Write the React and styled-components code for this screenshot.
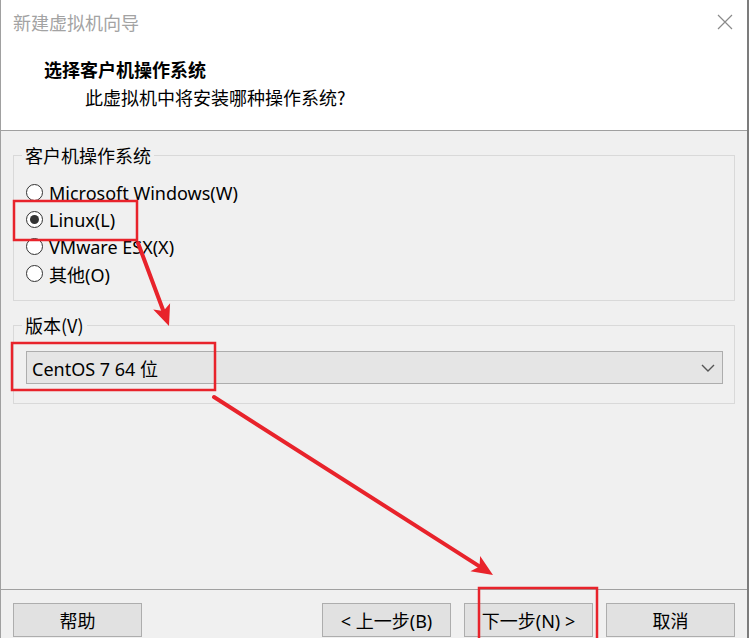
import React from 'react';
import styled, { createGlobalStyle } from 'styled-components';

const GlobalStyle = createGlobalStyle`
  html, body {
    margin: 0;
    padding: 0;
    background: #f0f0f0;
    overflow: hidden;
  }
  body {
    font-family: "Noto Sans", "Noto Sans CJK SC", sans-serif;
    color: #000;
  }
`;

const Window = styled.div`
  position: relative;
  width: 749px;
  height: 638px;
  box-sizing: border-box;
  border-left: 1px solid #a0a0a0;
  border-right: 2px solid #7c7c7c;
  background: #f0f0f0;
  display: flex;
  flex-direction: column;
  overflow: hidden;
`;

const TitleBar = styled.div`
  height: 44px;
  flex: none;
  background: #fff;
  display: flex;
  align-items: center;
  justify-content: space-between;
  padding: 0 14px 0 12px;
`;

const TitleText = styled.span`
  font-size: 18px;
  color: #a3a3a3;
  font-family: "Noto Sans CJK SC", sans-serif;
`;

const Header = styled.div`
  flex: none;
  background: #fff;
  border-bottom: 1px solid #a0a0a0;
  padding: 12px 0 0 43px;
  height: 74px;
`;

const Heading = styled.div`
  font-size: 18px;
  font-weight: bold;
  line-height: 26px;
  font-family: "Noto Sans CJK SC", sans-serif;
`;

const SubHeading = styled.div`
  font-size: 18px;
  line-height: 26px;
  margin: 2px 0 0 41px;
  font-family: "Noto Sans CJK SC", sans-serif;
`;

const Body = styled.div`
  flex: 1;
  padding: 12px 12px 0 12px;
  display: flex;
  flex-direction: column;
  gap: 12px;
`;

const Group = styled.fieldset`
  margin: 0;
  min-inline-size: 0;
  border: 1px solid #d9d9d9;
  padding: ${(p) => p.$pad};
  display: flex;
  flex-direction: column;
`;

const Legend = styled.legend`
  font-size: 18px;
  line-height: 24px;
  padding: 0 3px;
  margin-left: -4px;
  font-family: "Noto Sans CJK SC", sans-serif;
`;

const RadioRow = styled.label`
  height: 27px;
  display: flex;
  align-items: center;
  gap: 6px;
  font-size: 18px;
`;

const RadioCircle = styled.span`
  width: 17px;
  height: 17px;
  flex: none;
  box-sizing: border-box;
  border-radius: 50%;
  border: 1px solid #333;
  background: #fff;
  display: flex;
  align-items: center;
  justify-content: center;

  &::after {
    content: '';
    width: 9px;
    height: 9px;
    border-radius: 50%;
    background: ${(p) => (p.$checked ? '#333' : 'transparent')};
  }
`;

const Select = styled.div`
  height: 33px;
  box-sizing: border-box;
  background: #e5e5e5;
  border: 1px solid #adadad;
  display: flex;
  align-items: center;
  justify-content: space-between;
  padding: 0 6px 0 5px;
  font-size: 18px;
`;

const Footer = styled.div`
  flex: none;
  height: 49px;
  box-sizing: border-box;
  border-top: 1px solid #a0a0a0;
  padding: 13px 10px 0 12px;
  display: flex;
  align-items: flex-start;
  gap: 13px;
`;

const Button = styled.button`
  width: 129px;
  height: 34px;
  flex: none;
  margin-right: ${(p) => p.$push || 0}px;
  background: #e1e1e1;
  border: 1px solid #adadad;
  border-radius: 0;
  font-size: 18px;
  color: #000;
  font-family: "Noto Sans", "Noto Sans CJK SC", sans-serif;
  padding: 0;
`;

const Overlay = styled.svg`
  position: absolute;
  top: 0;
  left: 0;
  pointer-events: none;
`;

const RED = '#e8232b';

function Arrow({ x1, y1, x2, y2 }) {
  const dx = x2 - x1;
  const dy = y2 - y1;
  const len = Math.hypot(dx, dy);
  const ux = dx / len;
  const uy = dy / len;
  const px = -uy;
  const py = ux;
  const head = 21;
  const half = 9;
  const bx = x2 - ux * head;
  const by = y2 - uy * head;
  const ix = x2 - ux * (head - 5);
  const iy = y2 - uy * (head - 5);
  const pts = [
    [x2, y2],
    [bx + px * half, by + py * half],
    [ix, iy],
    [bx - px * half, by - py * half],
  ]
    .map((p) => p.join(','))
    .join(' ');
  return (
    <g>
      <line x1={x1} y1={y1} x2={ix} y2={iy} stroke={RED} strokeWidth="4" strokeLinecap="round" />
      <polygon points={pts} fill={RED} />
    </g>
  );
}

const radios = [
  { label: 'Microsoft Windows(W)', checked: false },
  { label: 'Linux(L)', checked: true },
  { label: 'VMware ESX(X)', checked: false },
  { label: '其他(O)', checked: false },
];

export default function App() {
  return (
    <>
      <GlobalStyle />
      <Window>
        <TitleBar>
          <TitleText>新建虚拟机向导</TitleText>
          <svg width="16" height="16" viewBox="0 0 16 16">
            <path d="M1 1 L15 15 M15 1 L1 15" stroke="#8a8a8a" strokeWidth="1.2" fill="none" />
          </svg>
        </TitleBar>
        <Header>
          <Heading>选择客户机操作系统</Heading>
          <SubHeading>此虚拟机中将安装哪种操作系统?</SubHeading>
        </Header>
        <Body>
          <Group $pad="12px 12px 13px 12px">
            <Legend>客户机操作系统</Legend>
            {radios.map((r) => (
              <RadioRow key={r.label}>
                <RadioCircle $checked={r.checked} />
                {r.label}
              </RadioRow>
            ))}
          </Group>
          <Group $pad="14px 11px 19px 12px">
            <Legend>版本(V)</Legend>
            <Select>
              <span>CentOS 7 64 位</span>
              <svg width="16" height="10" viewBox="0 0 16 10">
                <polyline points="2,2 8,8 14,2" stroke="#555" strokeWidth="1.4" fill="none" />
              </svg>
            </Select>
          </Group>
        </Body>
        <Footer>
          <Button $push={167}>帮助</Button>
          <Button>&lt; 上一步(B)</Button>
          <Button>下一步(N) &gt;</Button>
          <Button>取消</Button>
        </Footer>
        <Overlay width="749" height="638">
          <rect x="13" y="201" width="123" height="39" fill="none" stroke={RED} strokeWidth="2.5" />
          <rect x="11" y="343" width="203" height="47" fill="none" stroke={RED} strokeWidth="2.5" />
          <rect x="478" y="588" width="118" height="60" fill="none" stroke={RED} strokeWidth="2.5" />
          <Arrow x1={137} y1={243} x2={168} y2={326} />
          <Arrow x1={213} y1={397} x2={492} y2={575} />
        </Overlay>
      </Window>
    </>
  );
}
